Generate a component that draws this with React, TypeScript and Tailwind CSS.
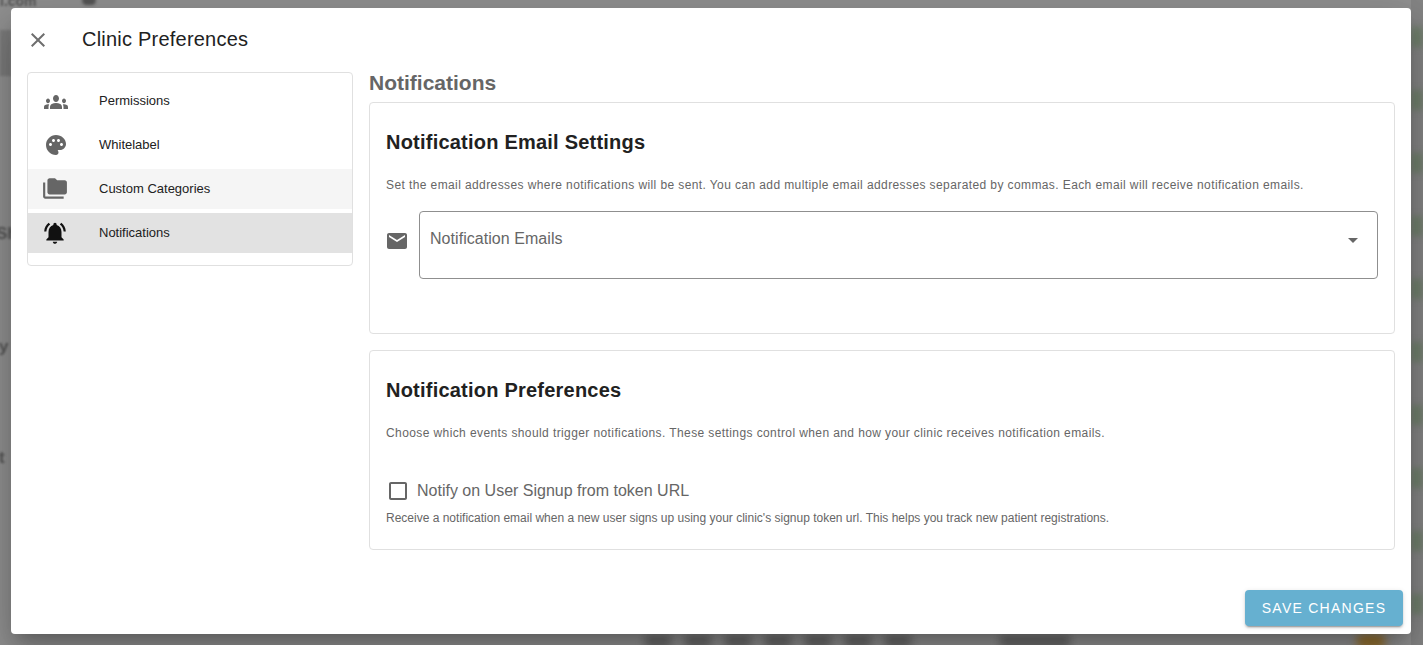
import React from "react";

const font = { fontFamily: '"Liberation Sans", Arial, sans-serif' };

function Item({ icon, label, cls }: { icon: React.ReactNode; label: string; cls: string }) {
  return (
    <div className={`flex h-10 items-center pl-4 ${cls}`}>
      <div className="flex w-[55px] shrink-0 items-center">{icon}</div>
      <span className="text-[13px] leading-5 text-[#212121]">{label}</span>
    </div>
  );
}

const PeopleIcon = () => (
  <svg width="24" height="28" viewBox="0 0 24 24" preserveAspectRatio="none" fill="#666" className="mt-[2px]">
    <path d="M12 12.75c1.63 0 3.07.39 4.24.9 1.08.48 1.76 1.56 1.76 2.73V18H6v-1.61c0-1.18.68-2.26 1.76-2.73 1.17-.52 2.61-.91 4.24-.91zM4 13c1.1 0 2-.9 2-2s-.9-2-2-2-2 .9-2 2 .9 2 2 2zm1.13 1.1C4.76 14.04 4.39 14 4 14c-.99 0-1.93.21-2.78.58C.48 14.9 0 15.62 0 16.43V18h4.5v-1.61c0-.83.23-1.61.63-2.29zM20 13c1.1 0 2-.9 2-2s-.9-2-2-2-2 .9-2 2 .9 2 2 2zm4 3.43c0-.81-.48-1.53-1.22-1.85C21.93 14.21 20.99 14 20 14c-.39 0-.76.04-1.13.1.4.68.63 1.46.63 2.29V18H24v-1.57zM12 6c1.66 0 3 1.34 3 3s-1.34 3-3 3-3-1.34-3-3 1.34-3 3-3z" />
  </svg>
);
const PaletteIcon = () => (
  <svg width="24" height="24" viewBox="0 0 24 24" fill="#666">
    <path d="M12 2C6.49 2 2 6.49 2 12s4.49 10 10 10c1.38 0 2.5-1.12 2.5-2.5 0-.61-.23-1.2-.64-1.67-.08-.1-.13-.21-.13-.33 0-.28.22-.5.5-.5H16c3.31 0 6-2.69 6-6 0-4.96-4.49-9-10-9zm-5.5 11c-.83 0-1.5-.67-1.5-1.5S5.67 10 6.5 10s1.5.67 1.5 1.5S7.33 13 6.5 13zm3-4C8.67 9 8 8.33 8 7.5S8.67 6 9.5 6s1.5.67 1.5 1.5S10.33 9 9.5 9zm5 0c-.83 0-1.5-.67-1.5-1.5S13.67 6 14.5 6s1.5.67 1.5 1.5S15.33 9 14.5 9zm3 4c-.83 0-1.5-.67-1.5-1.5s.67-1.5 1.5-1.5 1.5.67 1.5 1.5-.67 1.5-1.5 1.5z" />
  </svg>
);
const FolderCopyIcon = () => (
  <svg width="26" height="26" viewBox="0 0 24 24" fill="#666" className="-ml-[2px]">
    <path d="M3 19h17v2H3c-1.1 0-2-.9-2-2V6h2v13zM23 6v9c0 1.1-.9 2-2 2H7c-1.1 0-2-.9-2-2l.01-11c0-1.1.89-2 1.99-2h5l2 2h7c1.1 0 2 .9 2 2z" />
  </svg>
);
const BellIcon = () => (
  <svg width="26" height="26" viewBox="0 0 24 24" fill="#111" className="-ml-[2px]">
    <path d="M7.58 4.08 6.15 2.65C3.75 4.48 2.17 7.3 2.03 10.5h2c.15-2.65 1.51-4.97 3.55-6.42zm12.39 6.42h2c-.15-3.2-1.73-6.02-4.12-7.85l-1.42 1.43c2.02 1.45 3.39 3.77 3.54 6.42zM18 11c0-3.07-1.64-5.64-4.5-6.32V4c0-.83-.67-1.5-1.5-1.5s-1.5.67-1.5 1.5v.68C7.63 5.36 6 7.92 6 11v5l-2 2v1h16v-1l-2-2v-5zm-6 11c.14 0 .27-.01.4-.04.65-.14 1.18-.58 1.44-1.18.1-.24.15-.5.15-.78h-4c.01 1.1.9 2 2.01 2z" />
  </svg>
);

const greenBlobs = [0, 1, 2, 3, 4, 5, 6, 7, 8, 9];
const bottomBars = [0, 1, 2, 3, 4, 5, 6];

function Backdrop() {
  return (
    <div className="absolute inset-0 overflow-hidden bg-[#919191]">
      <div className="absolute left-0 top-[30px] h-[46px] w-[11px] bg-[#7c7c7c] blur-[1px]" />
      <div className="absolute left-0 top-0 -mt-[6px] text-[14px] font-bold leading-[14px] text-[#555] blur-[1px]">l.com</div>
      <div className="absolute -top-[4px] left-[82px] h-[9px] w-[14px] rounded-full bg-[#555] blur-[1.5px]" />
      <div className="absolute left-[-4px] top-[225px] text-[17px] font-bold leading-[18px] text-[#555] blur-[1px]">Sh</div>
      <div className="absolute left-[-1px] top-[338px] text-[17px] font-bold leading-[18px] text-[#555] blur-[1px]">y</div>
      <div className="absolute left-[-1px] top-[449px] text-[17px] font-bold leading-[18px] text-[#555] blur-[1px]">t</div>
      <div className="absolute right-0 top-0 flex h-full w-[12px] flex-col gap-[43px] bg-[#858585] pt-[27px]">
        {greenBlobs.map((b) => (
          <div key={b} className="h-5 w-full shrink-0 bg-[#70806c] blur-[3px]" />
        ))}
      </div>
      <div className="absolute -bottom-[3px] left-[645px] flex gap-[14px]">
        {bottomBars.map((b) => (
          <div key={b} className="h-[13px] w-[26px] bg-[#666] blur-[4px]" />
        ))}
      </div>
      <div className="absolute -bottom-[3px] left-[1000px] h-[13px] w-[70px] bg-[#666] blur-[4px]" />
      <div className="absolute -bottom-[4px] left-[1356px] h-[15px] w-[30px] rounded-full bg-[#96702c] blur-[4px]" />
    </div>
  );
}

export default function App() {
  return (
    <div style={font} className="relative flex h-[645px] w-[1423px] overflow-hidden pb-[11px] pl-[11px] pr-3 pt-2">
      <Backdrop />
      <div className="relative flex h-[626px] w-[1400px] flex-col rounded bg-white shadow-[0_11px_15px_-7px_rgba(0,0,0,0.2),0_24px_38px_3px_rgba(0,0,0,0.14),0_9px_46px_8px_rgba(0,0,0,0.12)]">
        <header className="mb-[2px] flex h-[62px] shrink-0 items-center pl-4">
          <svg width="24" height="24" viewBox="0 0 24 24" fill="#6e6e6e" className="-ml-px mt-[2px] shrink-0">
            <path d="M19 6.41 17.59 5 12 10.59 6.41 5 5 6.41 10.59 12 5 17.59 6.41 19 12 13.41 17.59 19 19 17.59 13.41 12z" />
          </svg>
          <h1 className="ml-[32px] text-[20px] font-normal leading-[32px] tracking-[0.22px] text-[#212121]">Clinic Preferences</h1>
        </header>
        <div className="flex min-h-0 flex-1 gap-4 px-4">
          <aside className="w-[326px] shrink-0">
            <nav className="h-[194px] rounded border border-[#e0e0e0] bg-white py-2">
              <Item icon={<PeopleIcon />} label="Permissions" cls="mb-1" />
              <Item icon={<PaletteIcon />} label="Whitelabel" cls="mb-1" />
              <Item icon={<FolderCopyIcon />} label="Custom Categories" cls="mb-1 bg-[#f5f5f5]" />
              <Item icon={<BellIcon />} label="Notifications" cls="bg-[#e2e2e2]" />
            </nav>
          </aside>
          <main className="flex min-w-0 flex-1 flex-col">
            <h2 className="mb-[5px] h-[25px] text-[21px] font-bold leading-[22px] text-[#666]">Notifications</h2>
            <section className="mb-4 h-[232px] rounded border border-[#e0e0e0] px-4 pt-4">
              <h3 className="text-[20px] font-bold leading-[46px] tracking-[0.22px] text-[#212121]">Notification Email Settings</h3>
              <p className="mt-[12px] text-[12px] leading-4 tracking-[0.4px] text-[#666]">
                Set the email addresses where notifications will be sent. You can add multiple email addresses separated by commas. Each email will receive notification emails.
              </p>
              <div className="mt-[18px] flex items-start gap-[10px]">
                <svg width="24" height="24" viewBox="0 0 24 24" fill="#666" className="-ml-px mt-[18px] shrink-0">
                  <path d="M20 4H4c-1.1 0-1.99.9-1.99 2L2 18c0 1.1.9 2 2 2h16c1.1 0 2-.9 2-2V6c0-1.1-.9-2-2-2zm0 4-8 5-8-5V6l8 5 8-5v2z" />
                </svg>
                <div className="flex h-[68px] flex-1 items-start justify-between rounded border border-[#8f8f8f] pl-[10px] pr-[14px] pt-4">
                  <span className="text-base leading-[22px] tracking-[0.05px] text-[#666]">Notification Emails</span>
                  <svg width="24" height="24" viewBox="0 0 24 24" fill="#666" className="-mr-[2px]">
                    <path d="M7 10l5 5 5-5z" />
                  </svg>
                </div>
              </div>
            </section>
            <section className="h-[200px] rounded border border-[#e0e0e0] px-4 pt-4">
              <h3 className="text-[20px] font-bold leading-[46px] tracking-[0.22px] text-[#212121]">Notification Preferences</h3>
              <p className="mt-[12px] text-[12px] leading-4 tracking-[0.4px] text-[#666]">
                Choose which events should trigger notifications. These settings control when and how your clinic receives notification emails.
              </p>
              <label className="mt-[38px] flex h-6 items-center">
                <svg width="24" height="24" viewBox="0 0 24 24" fill="#666" className="shrink-0">
                  <path d="M19 5v14H5V5h14m0-2H5c-1.1 0-2 .9-2 2v14c0 1.1.9 2 2 2h14c1.1 0 2-.9 2-2V5c0-1.1-.9-2-2-2z" />
                </svg>
                <span className="ml-[7px] text-base leading-6 text-[#666]">Notify on User Signup from token URL</span>
              </label>
              <p className="mt-[7px] text-[12px] leading-4 text-[#666]">
                Receive a notification email when a new user signs up using your clinic's signup token url. This helps you track new patient registrations.
              </p>
            </section>
          </main>
        </div>
        <footer className="flex justify-end pb-2 pr-2">
          <button className="h-9 w-[158px] rounded bg-[#66b0d0] text-sm font-normal tracking-[1.25px] text-white shadow-[0_3px_1px_-2px_rgba(0,0,0,0.2),0_2px_2px_0_rgba(0,0,0,0.14),0_1px_5px_0_rgba(0,0,0,0.12)]">
            SAVE CHANGES
          </button>
        </footer>
      </div>
    </div>
  );
}
